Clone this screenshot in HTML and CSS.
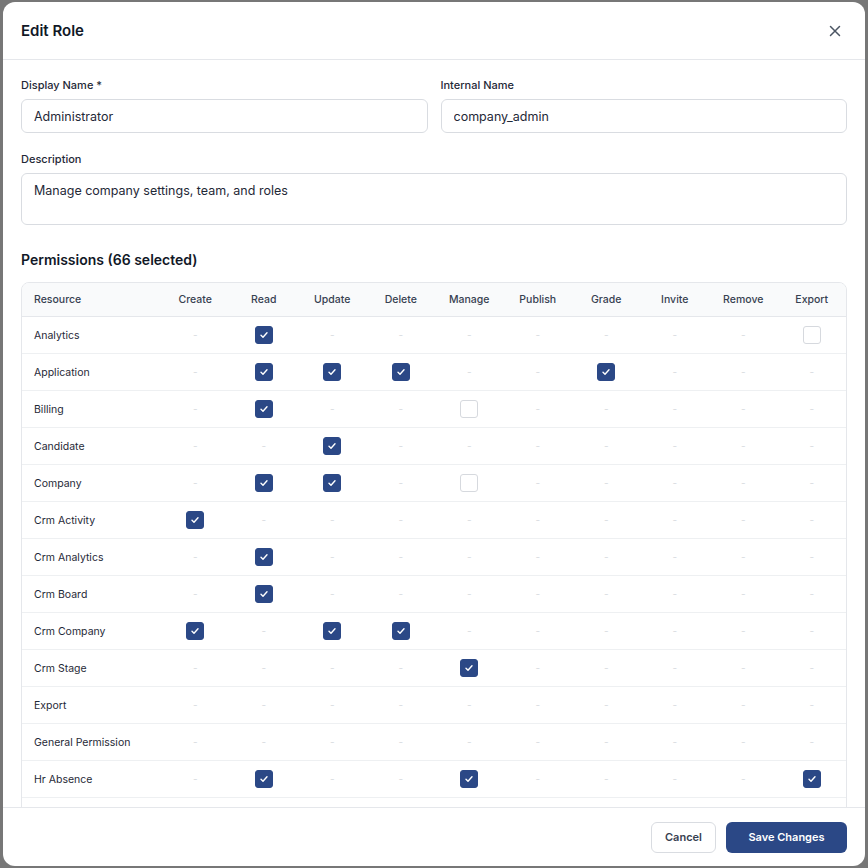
FILE: index.html
```html
<!DOCTYPE html>
<html lang="en">
<head>
    <meta charset="UTF-8">
    <meta name="viewport" content="width=device-width, initial-scale=1.0">
    <title>Edit Role</title>
    <link rel="stylesheet" href="styles.css">
</head>
<body>

    <div class="modal">
        <div class="modal-header">
            <h2>Edit Role</h2>
            <button class="close-btn" aria-label="Close">
                <svg width="12" height="12" viewBox="0 0 12 12"><path d="M1.5 1.5l9 9M10.5 1.5l-9 9" stroke="#4b5563" stroke-width="1.5" stroke-linecap="round"/></svg>
            </button>
        </div>

        <div class="modal-body">
            <div class="field-row">
                <div class="field">
                    <label>Display Name *</label>
                    <input type="text" value="Administrator">
                </div>
                <div class="field">
                    <label>Internal Name</label>
                    <input type="text" value="company_admin">
                </div>
            </div>

            <div class="field">
                <label>Description</label>
                <textarea>Manage company settings, team, and roles</textarea>
            </div>

            <h3>Permissions (66 selected)</h3>

            <!-- Permissions matrix -->
            <div class="perm-wrap">
                <table class="perm-table" id="perm-table">
                    <colgroup>
                        <col class="col-resource">
                    </colgroup>
                    <thead>
                        <tr>
                            <th>Resource</th>
                            <th>Create</th>
                            <th>Read</th>
                            <th>Update</th>
                            <th>Delete</th>
                            <th>Manage</th>
                            <th>Publish</th>
                            <th>Grade</th>
                            <th>Invite</th>
                            <th>Remove</th>
                            <th>Export</th>
                        </tr>
                    </thead>
                    <tbody>
                        <!-- rows rendered below -->
                    </tbody>
                </table>
            </div>
        </div>

        <div class="modal-footer">
            <a href="#" class="btn btn-cancel">Cancel</a>
            <a href="#" class="btn btn-save">Save Changes</a>
        </div>
    </div>

    <script>
        // x = checked, o = available but unchecked, - = not available
        // order: create read update delete manage publish grade invite remove export
        const resources = [
            ['Analytics',          '-x-------o'],
            ['Application',        '-xxx--x---'],
            ['Billing',            '-x--o-----'],
            ['Candidate',          '--x-------'],
            ['Company',            '-xx-o-----'],
            ['Crm Activity',       'x---------'],
            ['Crm Analytics',      '-x--------'],
            ['Crm Board',          '-x--------'],
            ['Crm Company',        'x-xx------'],
            ['Crm Stage',          '----x-----'],
            ['Export',             '----------'],
            ['General Permission', '----------'],
            ['Hr Absence',         '-x--x----x'],
            ['Hr Employee',        '-x--------']
        ];

        const tick = '<svg width="10" height="10" viewBox="0 0 10 10"><path d="M2 5.2l2 2 4-4.4" fill="none" stroke="#fff" stroke-width="1.4" stroke-linecap="round" stroke-linejoin="round"/></svg>';

        function renderTable() {
            let body = document.getElementById('perm-table').getElementsByTagName('tbody')[0];
            resources.forEach(([name, flags]) => {
                let row = body.insertRow();
                let html = `<td>${name}</td>`;
                for (let c of flags) {
                    if (c === 'x') html += `<td><span class="check checked">${tick}</span></td>`;
                    else if (c === 'o') html += '<td><span class="check"></span></td>';
                    else html += '<td><span class="dash">-</span></td>';
                }
                row.innerHTML = html;
            });
        }

        renderTable();
    </script>

</body>
</html>
```

FILE: styles.css
```css
body, html {
    margin: 0;
    padding: 0;
    font-family: Inter, "Noto Sans", sans-serif;
    background-color: #777;
    color: #1f2937;
}
.modal {
    width: 862px;
    height: 864px;
    margin: 2px 3px;
    background: #fff;
    border-radius: 12px;
    display: flex;
    flex-direction: column;
    overflow: hidden;
}
.modal-header {
    height: 57px;
    flex-shrink: 0;
    display: flex;
    align-items: center;
    justify-content: space-between;
    padding: 0 18px;
    border-bottom: 1px solid #e5e7eb;
}
.modal-header h2 {
    margin: 0;
    font-size: 15px;
    font-weight: 600;
    color: #111827;
}
.close-btn {
    border: none;
    background: none;
    padding: 4px;
    margin-right: 2px;
    display: flex;
    cursor: pointer;
}
.modal-body {
    flex: 1;
    overflow: hidden;
    padding: 17px 18px 0;
}
.field-row {
    display: flex;
    gap: 13px;
}
.field-row .field {
    flex: 1;
}
.field {
    display: flex;
    flex-direction: column;
    margin-bottom: 18px;
}
.field label {
    font-size: 11px;
    font-weight: 500;
    line-height: 16px;
    color: #1f2937;
    margin-bottom: 6px;
}
.field input, .field textarea {
    font-family: inherit;
    font-size: 12.5px;
    color: #1f2937;
    border: 1px solid #d9dce1;
    border-radius: 6px;
    padding: 0 12px;
    box-sizing: border-box;
    outline: none;
}
.field input {
    height: 34px;
}
.field textarea {
    height: 52px;
    padding-top: 9px;
    resize: none;
}
h3 {
    margin: 26px 0 13px;
    font-size: 14px;
    line-height: 18px;
    font-weight: 600;
    color: #111827;
}
.perm-wrap {
    border: 1px solid #e5e7eb;
    border-radius: 8px;
    overflow: hidden;
}
.perm-table {
    width: 100%;
    border-collapse: collapse;
    table-layout: fixed;
}
.col-resource {
    width: 139px;
}
.perm-table th {
    height: 33px;
    padding: 0;
    background-color: #f9fafb;
    font-size: 10.5px;
    font-weight: 500;
    color: #374151;
    text-align: center;
    border-bottom: 1px solid #e5e7eb;
}
.perm-table td {
    height: 36px;
    padding: 0;
    text-align: center;
    border-bottom: 1px solid #eef0f2;
    font-size: 10.5px;
}
.perm-table th:first-child, .perm-table td:first-child {
    text-align: left;
    padding-left: 12px;
}
.perm-table td:first-child {
    color: #1f2937;
}
.check {
    display: inline-flex;
    align-items: center;
    justify-content: center;
    width: 18px;
    height: 18px;
    box-sizing: border-box;
    border: 1px solid #d6d9de;
    border-radius: 3px;
    vertical-align: middle;
    background: #fff;
}
.check.checked {
    background-color: #2b4886;
    border-color: #2b4886;
}
.dash {
    color: #d8dbe0;
    font-size: 10px;
}
.modal-footer {
    height: 58px;
    flex-shrink: 0;
    display: flex;
    align-items: center;
    justify-content: flex-end;
    gap: 10px;
    padding: 0 18px;
    border-top: 1px solid #e5e7eb;
}
.btn {
    display: inline-flex;
    align-items: center;
    justify-content: center;
    height: 31px;
    box-sizing: border-box;
    border-radius: 6px;
    font-size: 11px;
    font-weight: 600;
    text-decoration: none;
}
.btn-cancel {
    width: 65px;
    border: 1px solid #d9dce1;
    color: #374151;
    background: #fff;
}
.btn-save {
    width: 121px;
    background-color: #2b4886;
    color: #fff;
}
.btn-save:hover {
    background-color: #233c72;
}
```
